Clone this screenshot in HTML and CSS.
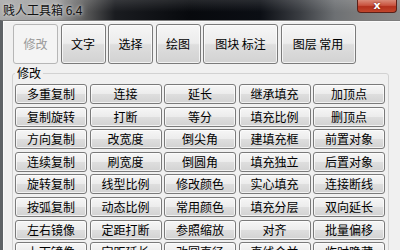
FILE: index.html
```html
<!DOCTYPE html>
<html lang="zh-CN">
<head>
<meta charset="utf-8">
<link rel="stylesheet" href="styles.css">
</head>
<body>
<div class="window">
  <div class="titlebar">
    <span class="title">贱人工具箱 6.4</span>
    <div class="close">x</div>
  </div>
  <div class="main">
    <div class="tabs">
      <button class="btn tab off">修改</button>
      <button class="btn tab">文字</button>
      <button class="btn tab">选择</button>
      <button class="btn tab">绘图</button>
      <button class="btn tab wide">图块 标注</button>
      <button class="btn tab wide">图层 常用</button>
    </div>
    <fieldset class="group">
      <legend>修改</legend>
      <div class="grid">
        <button class="btn">多重复制</button><button class="btn">连接</button><button class="btn">延长</button><button class="btn">继承填充</button><button class="btn">加顶点</button>
        <button class="btn">复制旋转</button><button class="btn">打断</button><button class="btn">等分</button><button class="btn">填充比例</button><button class="btn">删顶点</button>
        <button class="btn">方向复制</button><button class="btn">改宽度</button><button class="btn">倒尖角</button><button class="btn">建填充框</button><button class="btn">前置对象</button>
        <button class="btn">连续复制</button><button class="btn">刷宽度</button><button class="btn">倒圆角</button><button class="btn">填充独立</button><button class="btn">后置对象</button>
        <button class="btn">旋转复制</button><button class="btn">线型比例</button><button class="btn">修改颜色</button><button class="btn">实心填充</button><button class="btn">连接断线</button>
        <button class="btn">按弧复制</button><button class="btn">动态比例</button><button class="btn">常用颜色</button><button class="btn">填充分层</button><button class="btn">双向延长</button>
        <button class="btn">左右镜像</button><button class="btn">定距打断</button><button class="btn">参照缩放</button><button class="btn">对齐</button><button class="btn">批量偏移</button>
        <button class="btn">上下镜像</button><button class="btn">定距延长</button><button class="btn">改圆直径</button><button class="btn">直线合并</button><button class="btn">临时隐藏</button>
      </div>
    </fieldset>
  </div>
</div>
</body>
</html>
```

FILE: styles.css
```css
html, body {
  margin: 0;
  padding: 0;
  width: 400px;
  height: 250px;
  overflow: hidden;
  background: #f0f0f0;
  font-family: "Noto Sans CJK SC", "Liberation Sans", sans-serif;
  font-size: 12px;
  color: #000;
}

.window {
  width: 400px;
  height: 250px;
  overflow: hidden;
  display: flex;
  flex-direction: column;
}

.titlebar {
  height: 20px;
  flex: none;
  display: flex;
  justify-content: space-between;
  align-items: flex-start;
  background:
    linear-gradient(180deg, rgba(255,255,255,0.12) 0, rgba(255,255,255,0) 60%),
    linear-gradient(90deg, #a9a9a9 0, #9c9c9c 55px, #5a5a5a 85px, #1a1c20 115px, #07090d 190px, #0b0e14 260px, #3a3d42 300px, #6d7073 335px, #7e7e7e 365px, #8a8a8a 400px);
}

.title {
  padding: 3px 0 0 3px;
  line-height: 14px;
  font-size: 12px;
  color: #111;
  text-shadow: 0 0 6px rgba(230,230,230,0.9), 0 0 3px rgba(220,220,220,0.9);
  white-space: nowrap;
}

.close {
  width: 40px;
  height: 13px;
  margin-right: 3px;
  box-sizing: border-box;
  border: 1px solid #5a2018;
  border-top: none;
  border-radius: 0 0 4px 4px;
  background: linear-gradient(180deg, #d98a78 0, #c9533f 45%, #b3301c 55%, #c2462c 100%);
  color: #fff;
  font-family: "DejaVu Sans", sans-serif;
  font-weight: bold;
  font-size: 11px;
  line-height: 11px;
  text-align: center;
  text-shadow: 0 0 2px #5a1008;
}

.main {
  flex: 1;
  border-top: 1px solid #7c7c7c;
  border-left: 3px solid #5e6266;
  padding: 3px 0 0 9px;
  background: #f0f0f0;
  box-shadow: inset 1px 1px 0 #fafafa;
}

.tabs {
  display: flex;
  gap: 2.5px;
  margin-left: 1px;
  height: 40px;
}

.btn {
  font-family: "Noto Sans CJK SC", "Liberation Sans", sans-serif;
  font-size: 12px;
  line-height: 14px;
  color: #000;
  padding: 0;
  margin: 0;
  box-sizing: border-box;
  border: 1px solid #7a7a7a;
  border-radius: 3px;
  background: linear-gradient(180deg, #f6f6f6 0, #ececec 48%, #dedede 52%, #d2d2d2 100%);
  box-shadow: inset 0 0 0 1px rgba(255,255,255,0.7);
  white-space: nowrap;
}

.tab {
  width: 45px;
  height: 40px;
}

.tab.wide {
  width: 75px;
}

.tab.off {
  color: #9a9a9a;
  border-color: #b6b6b6;
  background: #f4f4f4;
  box-shadow: none;
}

.group {
  width: 377px;
  box-sizing: border-box;
  margin: 3px 0 0 0;
  padding: 5px 3px 0 2px;
  border: 1px solid #d2d2d2;
  border-radius: 3px;
  min-inline-size: 0;
}

.group legend {
  padding: 0 2px;
  font-size: 12px;
  line-height: 12px;
  color: #000;
}

.grid {
  display: grid;
  grid-template-columns: repeat(5, 1fr);
  grid-auto-rows: 20px;
  column-gap: 2.5px;
  row-gap: 2.6px;
}

.grid .btn {
  height: 20px;
}
```
